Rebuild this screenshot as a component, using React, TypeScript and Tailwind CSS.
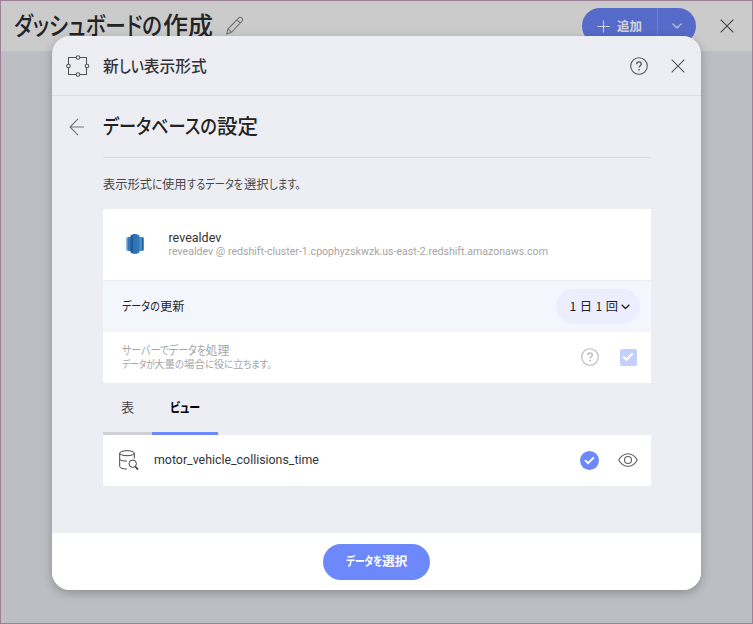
import type { ReactNode } from 'react';

const jp = 'font-["Noto_Sans_CJK_JP",sans-serif]';
const palt = "[font-feature-settings:'palt']";

function Jp({ className = '', children }: { className?: string; children: ReactNode }) {
  return <span className={`flex items-baseline whitespace-nowrap ${jp} ${palt} ${className}`}>{children}</span>;
}

// Condensed kana run: the width class reserves the narrowed advance.
function K({ className, children }: { className: string; children: ReactNode }) {
  return <span className={`block shrink-0 origin-left whitespace-nowrap ${className}`}>{children}</span>;
}

function Close({ className = '' }: { className?: string }) {
  return (
    <svg className={`shrink-0 ${className}`} width="14" height="14" viewBox="0 0 14 14" fill="none" stroke="currentColor" strokeWidth="1.1">
      <path d="M.7.7l12.6 12.6M13.3.7L.7 13.3" />
    </svg>
  );
}

function Help({ className = '' }: { className?: string }) {
  return (
    <svg className={`shrink-0 ${className}`} width="18" height="18" viewBox="0 0 18 18" fill="none" stroke="currentColor">
      <circle cx="9" cy="9" r="8.3" strokeWidth="1.1" />
      <path d="M6.7 7.2C6.7 5.7 7.7 4.8 9 4.8s2.3.8 2.3 2.1c0 1.8-2.2 1.8-2.2 3.7" strokeWidth="1.3" />
      <path d="M9.1 12v1.4" strokeWidth="1.4" />
    </svg>
  );
}

function Header() {
  return (
    <header className="flex h-[50px] items-start bg-[#cbcbcb] text-[#242424]">
      <Jp className="mt-[4px] ml-[13px] w-[199px] text-[25px] leading-[38px] font-medium">
        <K className="w-[149px] scale-x-[0.825]">ダッシュボードの</K>作成
      </Jp>
      <svg className="mt-[15px] ml-[13px] shrink-0 text-[#727272]" width="18" height="19" viewBox="0 0 18 19" fill="none" stroke="currentColor" strokeWidth="1.1">
        <path d="M.8 18l1.1-5L12.5 2.2c1-1.2 2.4-1.2 3.4-.2s1 2.3-.1 3.4L5.5 16.3.8 18zM11 3.8l3.3 3.3M2.2 12.8l3.2 3.3" />
      </svg>
      <div className="mt-[7px] ml-auto flex h-[36px] w-[114px] shrink-0 items-center rounded-full bg-[#566bc9] text-[#d2d4dc]">
        <svg className="ml-[15px]" width="13" height="13" viewBox="0 0 13 13" stroke="currentColor" strokeWidth="1">
          <path d="M6.5.5v12M.5 6.5h12" />
        </svg>
        <Jp className="ml-[7px] text-[12.5px] font-bold">追加</Jp>
        <span className="ml-auto h-full w-px bg-[#7580b8]" />
        <svg className="mr-[14px] ml-[14px]" width="10" height="6" viewBox="0 0 10 6" fill="none" stroke="currentColor" strokeWidth="1.1">
          <path d="M.5.6L5 5 9.500.6" />
        </svg>
      </div>
      <Close className="mt-[18px] mr-[18.5px] ml-[23.5px] text-[#444]" />
    </header>
  );
}

function DialogTitle() {
  return (
    <div className="flex h-[60px] shrink-0 items-center border-b-[1.5px] border-[#dcdde2]">
      <svg className="ml-[14px] shrink-0 text-[#555]" width="24" height="22" viewBox="0 0 24 22" fill="none" stroke="currentColor" strokeWidth="1.1">
        <path d="M10 2.500H2.500V9M2.500 13V19.500H10M14 19.500h6.500V13M20.500 9V2.500H14" />
        <circle cx="12" cy="2.500" r="1.800" />
        <circle cx="12" cy="19.500" r="1.800" />
        <circle cx="2.500" cy="11" r="1.800" />
        <circle cx="21" cy="11" r="1.800" />
      </svg>
      <Jp className="ml-[13px] text-[15.75px] leading-6 font-medium text-[#333]">
        新<K className="w-[25px] scale-x-[0.88]">しい</K>表示形式
      </Jp>
      <Help className="mr-[23px] ml-auto text-[#555]" />
      <Close className="mr-[16px] text-[#555]" />
    </div>
  );
}

function SourceCard() {
  return (
    <section className="mt-[15px] bg-white">
      <div className="flex h-[71px] items-start">
        <svg className="mt-[25px] ml-[23px] shrink-0" width="18" height="20" viewBox="0 0 18 20">
          <path d="M.3 3.500L4 3v14l-3.700-.5z" fill="#5b9bcf" />
          <path d="M2 3.300L5 3v14l-3-.3z" fill="#3478b6" />
          <path d="M17.700 3.500L14 3v14l3.700-.5z" fill="#205b96" />
          <path d="M16 3.300L13 3v14l3-.3z" fill="#4a8fca" />
          <path d="M4.500 1.500Q9-.8 9 .3v19.400q-2.500 0-4.500-1.200z" fill="#205b98" />
          <path d="M13.500 1.500Q9-.8 9 .3v19.400q2.500 0 4.500-1.200z" fill="#3679ba" />
          <path d="M7 .500h4v19H7z" fill="#2e73b6" />
        </svg>
        <div className="mt-[21px] ml-[24.5px] font-[Roboto,sans-serif]">
          <p className="text-[12.5px] leading-[15px] text-[#333]">revealdev</p>
          <p className="text-[10.59px] leading-[13px] whitespace-nowrap text-[#a5a5a5]">revealdev @ redshift-cluster-1.cpophyzskwzk.us-east-2.redshift.amazonaws.com</p>
        </div>
      </div>
      <div className="flex h-[52px] items-center border-t border-[#ebedf3] bg-[#f4f6fe]">
        <Jp className="mb-px ml-[19px] text-[12.25px] text-[#222]">
          <K className="w-[38px] scale-x-[0.82]">データの</K>更新
        </Jp>
        <div className="mr-[11px] ml-auto flex h-[35px] w-[84px] items-center rounded-full bg-[#eceefe] text-[#222]">
          <Jp className="ml-[14px] text-[12.25px] [word-spacing:0.7px]">1 日 1 回</Jp>
          <svg className="mr-[10px] ml-auto" width="9" height="6" viewBox="0 0 9 6" fill="none" stroke="currentColor" strokeWidth="1.3">
            <path d="M.7.7l3.800 3.800L8.300.7" />
          </svg>
        </div>
      </div>
      <div className="flex h-[50.5px] items-center text-[#a5a5a5]">
        <div className="mb-[2px] ml-[19px]">
          <Jp className="text-[12px] leading-[15px]">
            <K className="w-[83.5px] scale-x-[0.83]">サーバーでデータを</K>処理
          </Jp>
          <Jp className="text-[10.5px] leading-[13px]">
            <K className="w-[32px] scale-x-[0.83]">データが</K>大量<K className="w-[9px] scale-x-[0.88]">の</K>場合
            <K className="w-[8.7px] scale-x-[0.88]">に</K>役<K className="w-[8.7px] scale-x-[0.88]">に</K>立
            <K className="w-[32px] scale-x-[0.88]">ちます。</K>
          </Jp>
        </div>
        <Help className="mr-[21px] ml-auto text-[#b5b5b5]" />
        <span className="mr-[14px] flex size-[17px] items-center justify-center rounded-[2px] bg-[#c4cffc]">
          <svg width="12" height="10" viewBox="0 0 12 10" fill="none" stroke="white" strokeWidth="2.100">
            <path d="M1.200 4.600l3.200 3.200 6.300-6.200" />
          </svg>
        </span>
      </div>
    </section>
  );
}

function Tabs() {
  return (
    <nav className="flex h-[52px]">
      <div className="flex w-[49px] items-center justify-center border-b-[3px] border-[#d0d1d7] text-[13px] text-[#444]">
        <Jp>表</Jp>
      </div>
      <div className="flex w-[66px] items-center justify-center border-b-[3px] border-[#6c88fa] text-[13px] font-bold text-black">
        <Jp><K className="w-[30px] scale-x-[0.84]">ビュー</K></Jp>
      </div>
    </nav>
  );
}

function ViewRow() {
  return (
    <div className="flex h-[51px] items-center bg-white">
      <svg className="ml-[16px] shrink-0 text-[#444]" width="20" height="21" viewBox="0 0 20 21" fill="none" stroke="currentColor" strokeWidth="1">
        <ellipse cx="8" cy="3.200" rx="7.300" ry="2.500" />
        <path d="M.7 3.200V16.500c0 1.500 3.500 2.500 7.300 2.500M15.300 3.200V8.500M.7 9c0 1.300 3.300 2.100 7.300 2.100" />
        <circle cx="13.700" cy="13.700" r="3.700" />
        <path d="M16.300 16.500l2.700 3.100" strokeWidth="1.700" />
      </svg>
      <span className="ml-[15px] font-[Roboto,sans-serif] text-[12.38px] text-[#333]">motor_vehicle_collisions_time</span>
      <span className="mr-[19px] ml-auto flex size-[19px] items-center justify-center rounded-full bg-[#6c88fa]">
        <svg width="11" height="9" viewBox="0 0 11 9" fill="none" stroke="white" strokeWidth="1.900">
          <path d="M1 4.200l3 3L9.800 1.500" />
        </svg>
      </span>
      <svg className="mr-[12.5px] mb-[1px] shrink-0 text-[#606060]" width="20" height="14" viewBox="0 0 20 14" fill="none" stroke="currentColor" strokeWidth="1.100">
        <path d="M.7 7C3.200 2.500 6.500.7 10 .7s6.800 1.800 9.300 6.300c-2.500 4.500-5.800 6.300-9.300 6.300S3.200 11.500.7 7z" />
        <circle cx="10" cy="7" r="3.500" />
      </svg>
    </div>
  );
}

export default function App() {
  return (
    <div className="relative h-[624px] w-[753px] overflow-hidden border-[1.5px] border-[#9c8196] bg-[#bdbec4]">
      <Header />
      <div className="absolute inset-0 flex justify-center pt-[35px]">
        <main className="flex h-[554px] w-[649px] flex-col overflow-hidden rounded-[18px] bg-[#edeef4] shadow-[0_3px_10px_rgba(0,0,0,0.25)]">
          <DialogTitle />
          <div className="flex-1 pr-[50.5px] pl-[51px]">
            <div className="flex h-[62px] items-center border-b-[1.5px] border-[#dcdde2]">
              <svg className="-ml-[34px] shrink-0 text-[#777]" width="15" height="18" viewBox="0 0 15 18" fill="none" stroke="currentColor" strokeWidth="1.100">
                <path d="M15 9H1M9 .8L1 9l8 8.200" />
              </svg>
              <Jp className="mb-[4px] ml-[19px] text-[20.5px] leading-[30px] font-medium text-[#222]">
                <K className="w-[114px] scale-x-[0.84]">データベースの</K>設定
              </Jp>
            </div>
            <Jp className="mt-[16px] text-[12.25px] leading-5 text-[#484848]">
              表示形式<K className="w-[10px] scale-x-[0.86]">に</K>使用<K className="w-[57.5px] scale-x-[0.83]">するデータを</K>選択
              <K className="w-[34px] scale-x-[0.84]">します。</K>
            </Jp>
            <SourceCard />
            <Tabs />
            <ViewRow />
          </div>
          <footer className="flex h-[57px] shrink-0 items-center justify-center bg-white">
            <button className="flex h-[36px] w-[107px] items-center justify-center rounded-full bg-[#6c88fa] text-[12.5px] font-bold text-white">
              <Jp><K className="w-[36.5px] scale-x-[0.77]">データを</K>選択</Jp>
            </button>
          </footer>
        </main>
      </div>
    </div>
  );
}
